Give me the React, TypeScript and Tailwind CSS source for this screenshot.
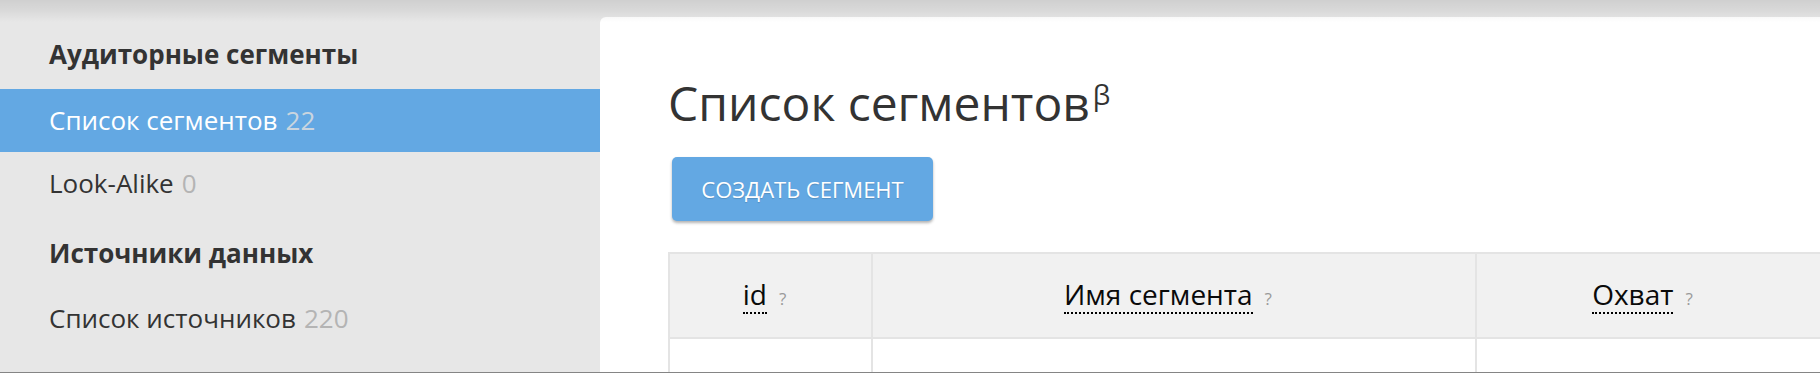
import React from "react";

function NavItem({ label, count, active }: { label: string; count: number; active?: boolean }) {
  return (
    <div
      className={
        "h-[63px] flex items-center pl-[49px] text-[26px] " +
        (active ? "bg-[#63a8e3] text-white" : "text-[#333333]")
      }
    >
      <span>{label}</span>
      <span className={"ml-[8px] " + (active ? "text-[#cad5df]" : "text-[#b4b4b4]")}>{count}</span>
    </div>
  );
}

function HeadCell({ label, className }: { label: string; className: string }) {
  return (
    <div className={"flex items-center justify-center bg-[#f1f1f1] " + className}>
      <span className="flex items-baseline -ml-[12px]">
        <span className="text-[28px] leading-[35px] text-[#0a0a0a] border-b-2 border-dotted border-black">{label}</span>
        <span className="ml-[12px] text-[17px] text-[#9a9a9a]">?</span>
      </span>
    </div>
  );
}

export default function App() {
  return (
    <div
      className="relative w-[1820px] h-[373px] overflow-hidden bg-[#e7e7e7] flex border-b border-[#858585]"
      style={{ fontFamily: '"Open Sans", "Noto Sans", sans-serif' }}
    >
      <aside className="w-[600px] shrink-0 pt-[22px]">
        <div className="h-[64px] flex items-center pl-[49px] text-[26px] font-bold text-[#333333]">
          Аудиторные сегменты
        </div>
        <div className="mt-[3px]">
          <NavItem label="Список сегментов" count={22} active />
          <NavItem label="Look-Alike" count={0} />
        </div>
        <div className="mt-[6px] h-[64px] flex items-center pl-[49px] text-[26px] font-bold text-[#333333]">
          Источники данных
        </div>
        <div className="mt-[2px]">
          <NavItem label="Список источников" count={220} />
        </div>
      </aside>
      <main className="flex-1 pt-[17px] min-w-0">
        <div className="h-full bg-white rounded-tl-[6px] pl-[68px] pt-[54px]">
          <h1 className="flex items-start text-[48px] leading-[64px] text-[#333333]">
            <span>Список сегментов</span>
            <span className="ml-[3px] mt-[9px] text-[28px] leading-none">β</span>
          </h1>
          <button className="mt-[22px] ml-[4px] w-[261px] h-[64px] rounded-[5px] bg-[#63a8e3] text-white text-[22px] uppercase shadow-[0_2px_3px_rgba(0,0,0,0.3)] [text-shadow:0_1px_1px_rgba(0,0,0,0.15)]">
            Создать сегмент
          </button>
          <div className="mt-[31px] grid grid-cols-[201px_602px_1fr] gap-[2px] bg-[#e4e4e4] p-[2px] pr-0">
            <HeadCell label="id" className="h-[83px]" />
            <HeadCell label="Имя сегмента" className="h-[83px]" />
            <HeadCell label="Охват" className="h-[83px]" />
            <div className="h-[60px] bg-white" />
            <div className="h-[60px] bg-white" />
            <div className="h-[60px] bg-white" />
          </div>
        </div>
      </main>
      <div className="pointer-events-none absolute inset-x-0 top-0 h-[22px] bg-gradient-to-b from-[rgba(0,0,0,0.1)] via-[rgba(0,0,0,0.06)] to-transparent" />
    </div>
  );
}
